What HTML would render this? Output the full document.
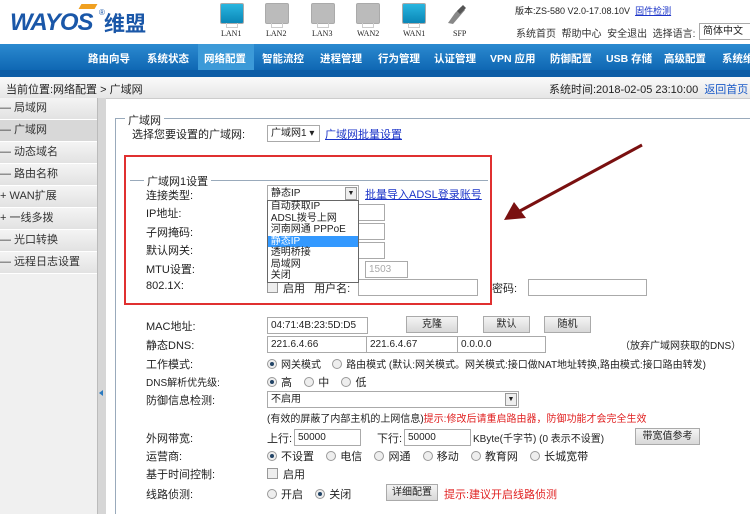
<!DOCTYPE html><html><head><meta charset="utf-8"><style>
body{margin:0;width:750px;height:514px;overflow:hidden;position:relative;font-family:"Liberation Sans","Noto Sans CJK SC",sans-serif;font-size:11px;color:#222;background:#fff}
.a{position:absolute;white-space:nowrap}
.hdr{left:0;top:0;width:750px;height:44px;background:#fff}
.nav{left:0;top:44px;width:750px;height:26px;background:linear-gradient(#2b8ad0,#0f67b3)}
.nav2{left:0;top:70px;width:750px;height:7px;background:#0d5da6}
.nav span{position:absolute;top:7px;color:#fff;font-weight:bold;font-size:10.5px}
.bc{left:0;top:77px;width:750px;height:21px;background:linear-gradient(#fafafa,#e6e6e6);border-bottom:1px solid #ccc}
.side{left:0;top:98px;width:97px;height:416px;background:#f0f0f0}
.si{position:absolute;left:0;width:97px;height:21px;border-bottom:1px solid #fff;background:linear-gradient(#f4f4f4,#e2e2e2);font-size:11px;line-height:21px;color:#333}
.bar{left:97px;top:98px;width:8px;height:416px;background:#d6d6d6;border-left:1px solid #bbb}
.inp{position:absolute;height:15px;border:1px solid #aaa;background:#fff;font-size:10px;line-height:16px;padding-left:3px;font-family:"Liberation Sans","Noto Sans CJK SC",sans-serif}
.btn{position:absolute;height:15px;border:1px solid #aaa;background:linear-gradient(#f4f4f4,#d8d8d8);font-size:10px;text-align:center;line-height:15px}
.rd{display:inline-block;width:8px;height:8px;border:1px solid #999;border-radius:50%;background:#eee;vertical-align:-1px;margin-right:4px;position:relative}
.rd.on::after{content:"";position:absolute;left:2px;top:2px;width:4px;height:4px;border-radius:50%;background:#246}
.cb{display:inline-block;width:9px;height:9px;border:1px solid #999;background:#eee;vertical-align:-1px;margin-right:5px}
.lnk{color:#1a33c8;text-decoration:underline}
.red{color:#e02020}
.ic{position:absolute;top:3px;width:22px;height:19px;border:1px solid #aaa;border-radius:2px}
.st{position:absolute;top:23px;width:10px;height:4px;border:1px solid #ccc;border-top:0}
.il{position:absolute;top:29px;font-size:8px;font-family:"Liberation Serif",serif}
</style></head><body>
<div class="a hdr"></div>
<div class="a" style="left:10px;top:9px;font:bold italic 24px 'Liberation Sans',sans-serif;color:#1a57a8;letter-spacing:-1px">WAYOS</div>
<div class="a" style="left:80px;top:4px;width:16px;height:5px;background:#f0a020;transform:skew(-30deg)"></div>
<div class="a" style="left:99px;top:8px;font-size:8px;color:#1a57a8">®</div>
<div class="a" style="left:104px;top:8px;font-size:21px;font-weight:bold;color:#1a57a8">维盟</div>
<div class="ic" style="left:220px;background:linear-gradient(#29b6e0,#0a86b6)"></div><div class="st" style="left:226px"></div><div class="il" style="left:221px">LAN1</div>
<div class="ic" style="left:265px;background:#bbb"></div><div class="st" style="left:271px"></div><div class="il" style="left:266px">LAN2</div>
<div class="ic" style="left:311px;background:#bbb"></div><div class="st" style="left:317px"></div><div class="il" style="left:312px">LAN3</div>
<div class="ic" style="left:356px;background:#bbb"></div><div class="st" style="left:362px"></div><div class="il" style="left:357px">WAN2</div>
<div class="ic" style="left:402px;background:linear-gradient(#29b6e0,#0a86b6)"></div><div class="st" style="left:408px"></div><div class="il" style="left:403px">WAN1</div>
<svg class="a" style="left:445px;top:3px" width="22" height="22"><path d="M3 20 L10 10 L16 4 L20 7 L14 14 L8 21 Z" fill="#888"/><path d="M12 8 L18 2 L21 5 L15 11 Z" fill="#555"/></svg><div class="il" style="left:453px">SFP</div>
<div class="a" style="left:515px;top:4px;font-size:9px">版本:ZS-580 V2.0-17.08.10V &nbsp;<span class="lnk">固件检测</span></div>
<div class="a" style="left:516px;top:25px;font-size:10px;color:#333">系统首页 &nbsp;帮助中心 &nbsp;安全退出 &nbsp;选择语言:</div>
<div class="inp" style="left:699px;top:23px;width:50px;font-size:10px">简体中文</div>
<div class="a nav"><span style="left:198px;top:0;height:26px;width:56px;background:#3c9ad8"></span><span style="left:88px">路由向导</span><span style="left:147px">系统状态</span><span style="left:204px">网络配置</span><span style="left:262px">智能流控</span><span style="left:320px">进程管理</span><span style="left:378px">行为管理</span><span style="left:434px">认证管理</span><span style="left:490px">VPN 应用</span><span style="left:550px">防御配置</span><span style="left:606px">USB 存储</span><span style="left:664px">高级配置</span><span style="left:722px">系统维</span></div>
<div class="a nav2"></div>
<div class="a bc"><span class="a" style="left:6px;top:4px">当前位置:网络配置 &gt; 广域网</span><span class="a" style="left:549px;top:4px">系统时间:2018-02-05 23:10:00 &nbsp;<span style="color:#1a5ac8">返回首页</span></span></div>
<div class="a side">
<div class="si" style="top:0">— 局域网</div><div class="si" style="top:22px;background:#d8d8d8">— 广域网</div><div class="si" style="top:44px">— 动态域名</div><div class="si" style="top:66px">— 路由名称</div><div class="si" style="top:88px">+ WAN扩展</div><div class="si" style="top:110px">+ 一线多拨</div><div class="si" style="top:132px">— 光口转换</div><div class="si" style="top:154px">— 远程日志设置</div></div>
<div class="a bar"></div>
<div class="a" style="left:99px;top:390px;width:0;height:0;border:3px solid transparent;border-right:4px solid #2a7ac0;border-left:0"></div>
<div class="a" style="left:115px;top:118px;width:1px;height:396px;background:#9ab"></div>
<div class="a" style="left:115px;top:118px;width:635px;height:1px;background:#9ab"></div>
<div class="a" style="left:125px;top:112px;background:#fff;padding:0 3px">广域网</div>
<div class="a" style="left:132px;top:126px">选择您要设置的广域网:</div>
<div class="inp" style="left:267px;top:125px;width:48px">广域网1 ▾</div>
<div class="a lnk" style="left:325px;top:126px">广域网批量设置</div>
<div class="a" style="left:124px;top:155px;width:364px;height:146px;border:2px solid #e03030"></div>
<div class="a" style="left:130px;top:180px;width:358px;height:1px;background:#9ab"></div>
<div class="a" style="left:144px;top:173px;background:#fff;padding:0 3px">广域网1设置</div>
<div class="a" style="left:146px;top:187px">连接类型:</div>
<div class="a" style="left:146px;top:205px">IP地址:</div>
<div class="a" style="left:146px;top:224px">子网掩码:</div>
<div class="a" style="left:146px;top:242px">默认网关:</div>
<div class="a" style="left:146px;top:261px">MTU设置:</div>
<div class="a" style="left:146px;top:280px">802.1X:</div>
<div class="inp" style="left:358px;top:204px;width:22px"></div>
<div class="inp" style="left:358px;top:223px;width:22px"></div>
<div class="inp" style="left:358px;top:242px;width:22px"></div>
<div class="inp" style="left:365px;top:261px;width:38px;color:#aaa">1503</div>
<div class="a" style="left:267px;top:280px"><span class="cb"></span>启用 &nbsp; 用户名:</div>
<div class="inp" style="left:358px;top:279px;width:115px"></div>
<div class="a" style="left:492px;top:280px">密码:</div>
<div class="inp" style="left:528px;top:279px;width:114px"></div>
<div class="inp" style="left:267px;top:185px;width:87px">静态IP<span style="position:absolute;right:1px;top:1px;width:10px;height:11px;border:1px solid #999;background:#eee;font-size:7px;line-height:11px;text-align:center">▼</span></div>
<div class="a lnk" style="left:365px;top:186px">批量导入ADSL登录账号</div>
<div class="a" style="left:267px;top:200px;width:90px;height:81px;border:1px solid #666;background:#fff;font-size:10px;line-height:11.5px">
<div>&nbsp;自动获取IP</div><div>&nbsp;ADSL拨号上网</div><div>&nbsp;河南网通 PPPoE</div><div style="background:#3399ff;color:#fff">&nbsp;静态IP</div><div>&nbsp;透明桥接</div><div>&nbsp;局域网</div><div>&nbsp;关闭</div></div>
<svg class="a" style="left:500px;top:140px" width="150" height="85"><line x1="142" y1="5" x2="18" y2="72" stroke="#7a1010" stroke-width="3"/><polygon points="4,80 14,62 26,78" fill="#7a1010"/></svg>
<div class="a" style="left:146px;top:318px">MAC地址:</div><div class="inp" style="left:267px;top:317px;width:96px">04:71:4B:23:5D:D5</div>
<div class="btn" style="left:406px;top:316px;width:50px">克隆</div><div class="btn" style="left:483px;top:316px;width:45px">默认</div><div class="btn" style="left:544px;top:316px;width:45px">随机</div>
<div class="a" style="left:146px;top:337px">静态DNS:</div>
<div class="inp" style="left:267px;top:336px;width:96px">221.6.4.66</div><div class="inp" style="left:366px;top:336px;width:89px">221.6.4.67</div><div class="inp" style="left:457px;top:336px;width:84px">0.0.0.0</div>
<div class="a" style="left:620px;top:337px;font-size:10px">（放弃广域网获取的DNS）</div>
<div class="a" style="left:146px;top:356px">工作模式:</div>
<div class="a" style="left:267px;top:356px;font-size:10px"><span class="rd on"></span>网关模式 &nbsp; &nbsp;<span class="rd"></span>路由模式 (默认:网关模式。网关模式:接口做NAT地址转换,路由模式:接口路由转发)</div>
<div class="a" style="left:146px;top:374px;font-size:10px">DNS解析优先级:</div>
<div class="a" style="left:267px;top:374px"><span class="rd on"></span>高 &nbsp; &nbsp;<span class="rd"></span>中 &nbsp; &nbsp;<span class="rd"></span>低</div>
<div class="a" style="left:146px;top:392px">防御信息检测:</div>
<div class="inp" style="left:267px;top:391px;width:247px">不启用<span style="position:absolute;right:1px;top:1px;width:10px;height:11px;border:1px solid #999;background:#eee;font-size:7px;line-height:11px;text-align:center">▼</span></div>
<div class="a" style="left:267px;top:410px;font-size:10px">(有效的屏蔽了内部主机的上网信息)<span class="red">提示:修改后请重启路由器，防御功能才会完全生效</span></div>
<div class="a" style="left:146px;top:430px">外网带宽:</div>
<div class="a" style="left:267px;top:430px">上行:</div><div class="inp" style="left:294px;top:429px;width:62px">50000</div>
<div class="a" style="left:377px;top:430px">下行:</div><div class="inp" style="left:404px;top:429px;width:62px">50000</div>
<div class="a" style="left:473px;top:430px;font-size:10px">KByte(千字节) (0 表示不设置)</div>
<div class="btn" style="left:635px;top:428px;width:63px">带宽值参考</div>
<div class="a" style="left:146px;top:448px">运营商:</div>
<div class="a" style="left:267px;top:448px"><span class="rd on"></span>不设置 &nbsp; &nbsp;<span class="rd"></span>电信 &nbsp; &nbsp;<span class="rd"></span>网通 &nbsp; &nbsp;<span class="rd"></span>移动 &nbsp; &nbsp;<span class="rd"></span>教育网 &nbsp; &nbsp;<span class="rd"></span>长城宽带</div>
<div class="a" style="left:146px;top:466px">基于时间控制:</div>
<div class="a" style="left:267px;top:466px"><span class="cb"></span>启用</div>
<div class="a" style="left:146px;top:486px">线路侦测:</div>
<div class="a" style="left:267px;top:486px"><span class="rd"></span>开启 &nbsp; &nbsp;<span class="rd on"></span>关闭</div>
<div class="btn" style="left:386px;top:484px;width:50px">详细配置</div>
<div class="a red" style="left:444px;top:486px">提示:建议开启线路侦测</div>
</body></html>
